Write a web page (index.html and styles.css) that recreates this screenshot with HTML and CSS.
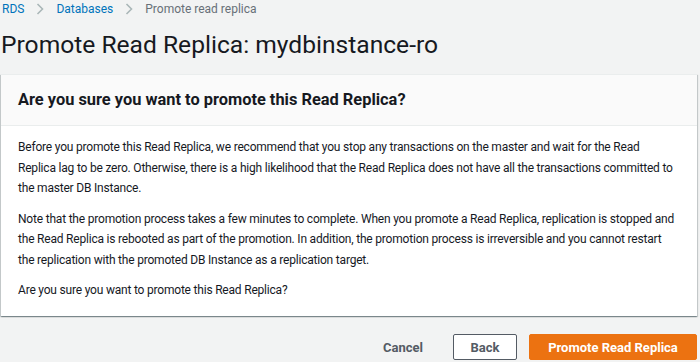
FILE: index.html
```html
<!DOCTYPE html>
<html lang="en">
<head>
    <meta charset="UTF-8">
    <meta name="viewport" content="width=device-width, initial-scale=1.0">
    <title>Promote Read Replica</title>
    <link rel="stylesheet" href="styles.css">
</head>
<body>

    <div class="page">
        <nav class="breadcrumbs">
            <a href="#">RDS</a>
            <svg class="chevron" width="8" height="12" viewBox="0 0 8 12"><polyline points="1.5,1 6.5,6 1.5,11" /></svg>
            <a href="#">Databases</a>
            <svg class="chevron" width="8" height="12" viewBox="0 0 8 12"><polyline points="1.5,1 6.5,6 1.5,11" /></svg>
            <span class="current">Promote read replica</span>
        </nav>

        <h1>Promote Read Replica: mydbinstance-ro</h1>

        <div class="card">
            <div class="card-header">
                <h2>Are you sure you want to promote this Read Replica?</h2>
            </div>
            <div class="card-body">
                <p>Before you promote this Read Replica, we recommend that you stop any transactions on the master and wait for the Read Replica lag to be zero. Otherwise, there is a high likelihood that the Read Replica does not have all the transactions committed to the master DB Instance.</p>
                <p>Note that the promotion process takes a few minutes to complete. When you promote a Read Replica, replication is stopped and the Read Replica is rebooted as part of the promotion. In addition, the promotion process is irreversible and you cannot restart the replication with the promoted DB Instance as a replication target.</p>
                <p>Are you sure you want to promote this Read Replica?</p>
            </div>
        </div>

        <div class="actions">
            <button class="btn btn-link">Cancel</button>
            <button class="btn btn-normal">Back</button>
            <button class="btn btn-primary">Promote Read Replica</button>
        </div>
    </div>

</body>
</html>
```
FILE: styles.css
```css
body {
    margin: 0;
    background: #f2f3f3;
    font-family: Roboto, "Liberation Sans", sans-serif;
    color: #16191f;
}
.page {
    padding: 0 3px 0 1px;
}
.breadcrumbs {
    display: flex;
    align-items: center;
    gap: 12px;
    height: 18px;
    padding-left: 1px;
    font-size: 12px;
}
.breadcrumbs a {
    color: #0073bb;
    text-decoration: none;
}
.breadcrumbs .current {
    color: #687078;
}
.chevron {
    fill: none;
    stroke: #aab7b8;
    stroke-width: 1.6;
}
h1 {
    margin: 12px 0 14px;
    font-size: 24.6px;
    font-weight: 400;
    line-height: 30px;
}
.card {
    background: white;
    box-shadow: 0 1px 1px 0 rgba(0, 28, 36, 0.3), 1px 1px 1px 0 rgba(0, 28, 36, 0.15), -1px 1px 1px 0 rgba(0, 28, 36, 0.15);
    border-top: 1px solid #eaeded;
}
.card-header {
    background: #fafafa;
    border-bottom: 1px solid #eaeded;
    padding: 14px 17px;
}
.card-header h2 {
    margin: 0;
    font-size: 16.4px;
    font-weight: 700;
    line-height: 22px;
}
.card-body {
    padding: 11px 17px 15.5px;
    font-size: 12px;
    line-height: 20.5px;
    letter-spacing: -0.2px;
}
.card-body p {
    margin: 0 0 10px;
}
.card-body p:last-child {
    margin-bottom: 0;
}
.actions {
    display: flex;
    justify-content: flex-end;
    align-items: center;
    margin-top: 18px;
}
.btn {
    height: 26px;
    padding: 0 18px;
    font-family: Roboto, "Liberation Sans", sans-serif;
    font-size: 13px;
    font-weight: 700;
    border-radius: 2px;
    cursor: pointer;
}
.btn-link {
    background: none;
    border: none;
    color: #545b64;
    margin-right: 12px;
}
.btn-normal {
    background: white;
    border: 1px solid #545b64;
    color: #545b64;
    width: 64px;
    padding: 0;
    margin-right: 12px;
}
.btn-primary {
    background: #ec7211;
    border: 1px solid #ec7211;
    color: white;
    width: 168px;
    padding: 0;
}
```
